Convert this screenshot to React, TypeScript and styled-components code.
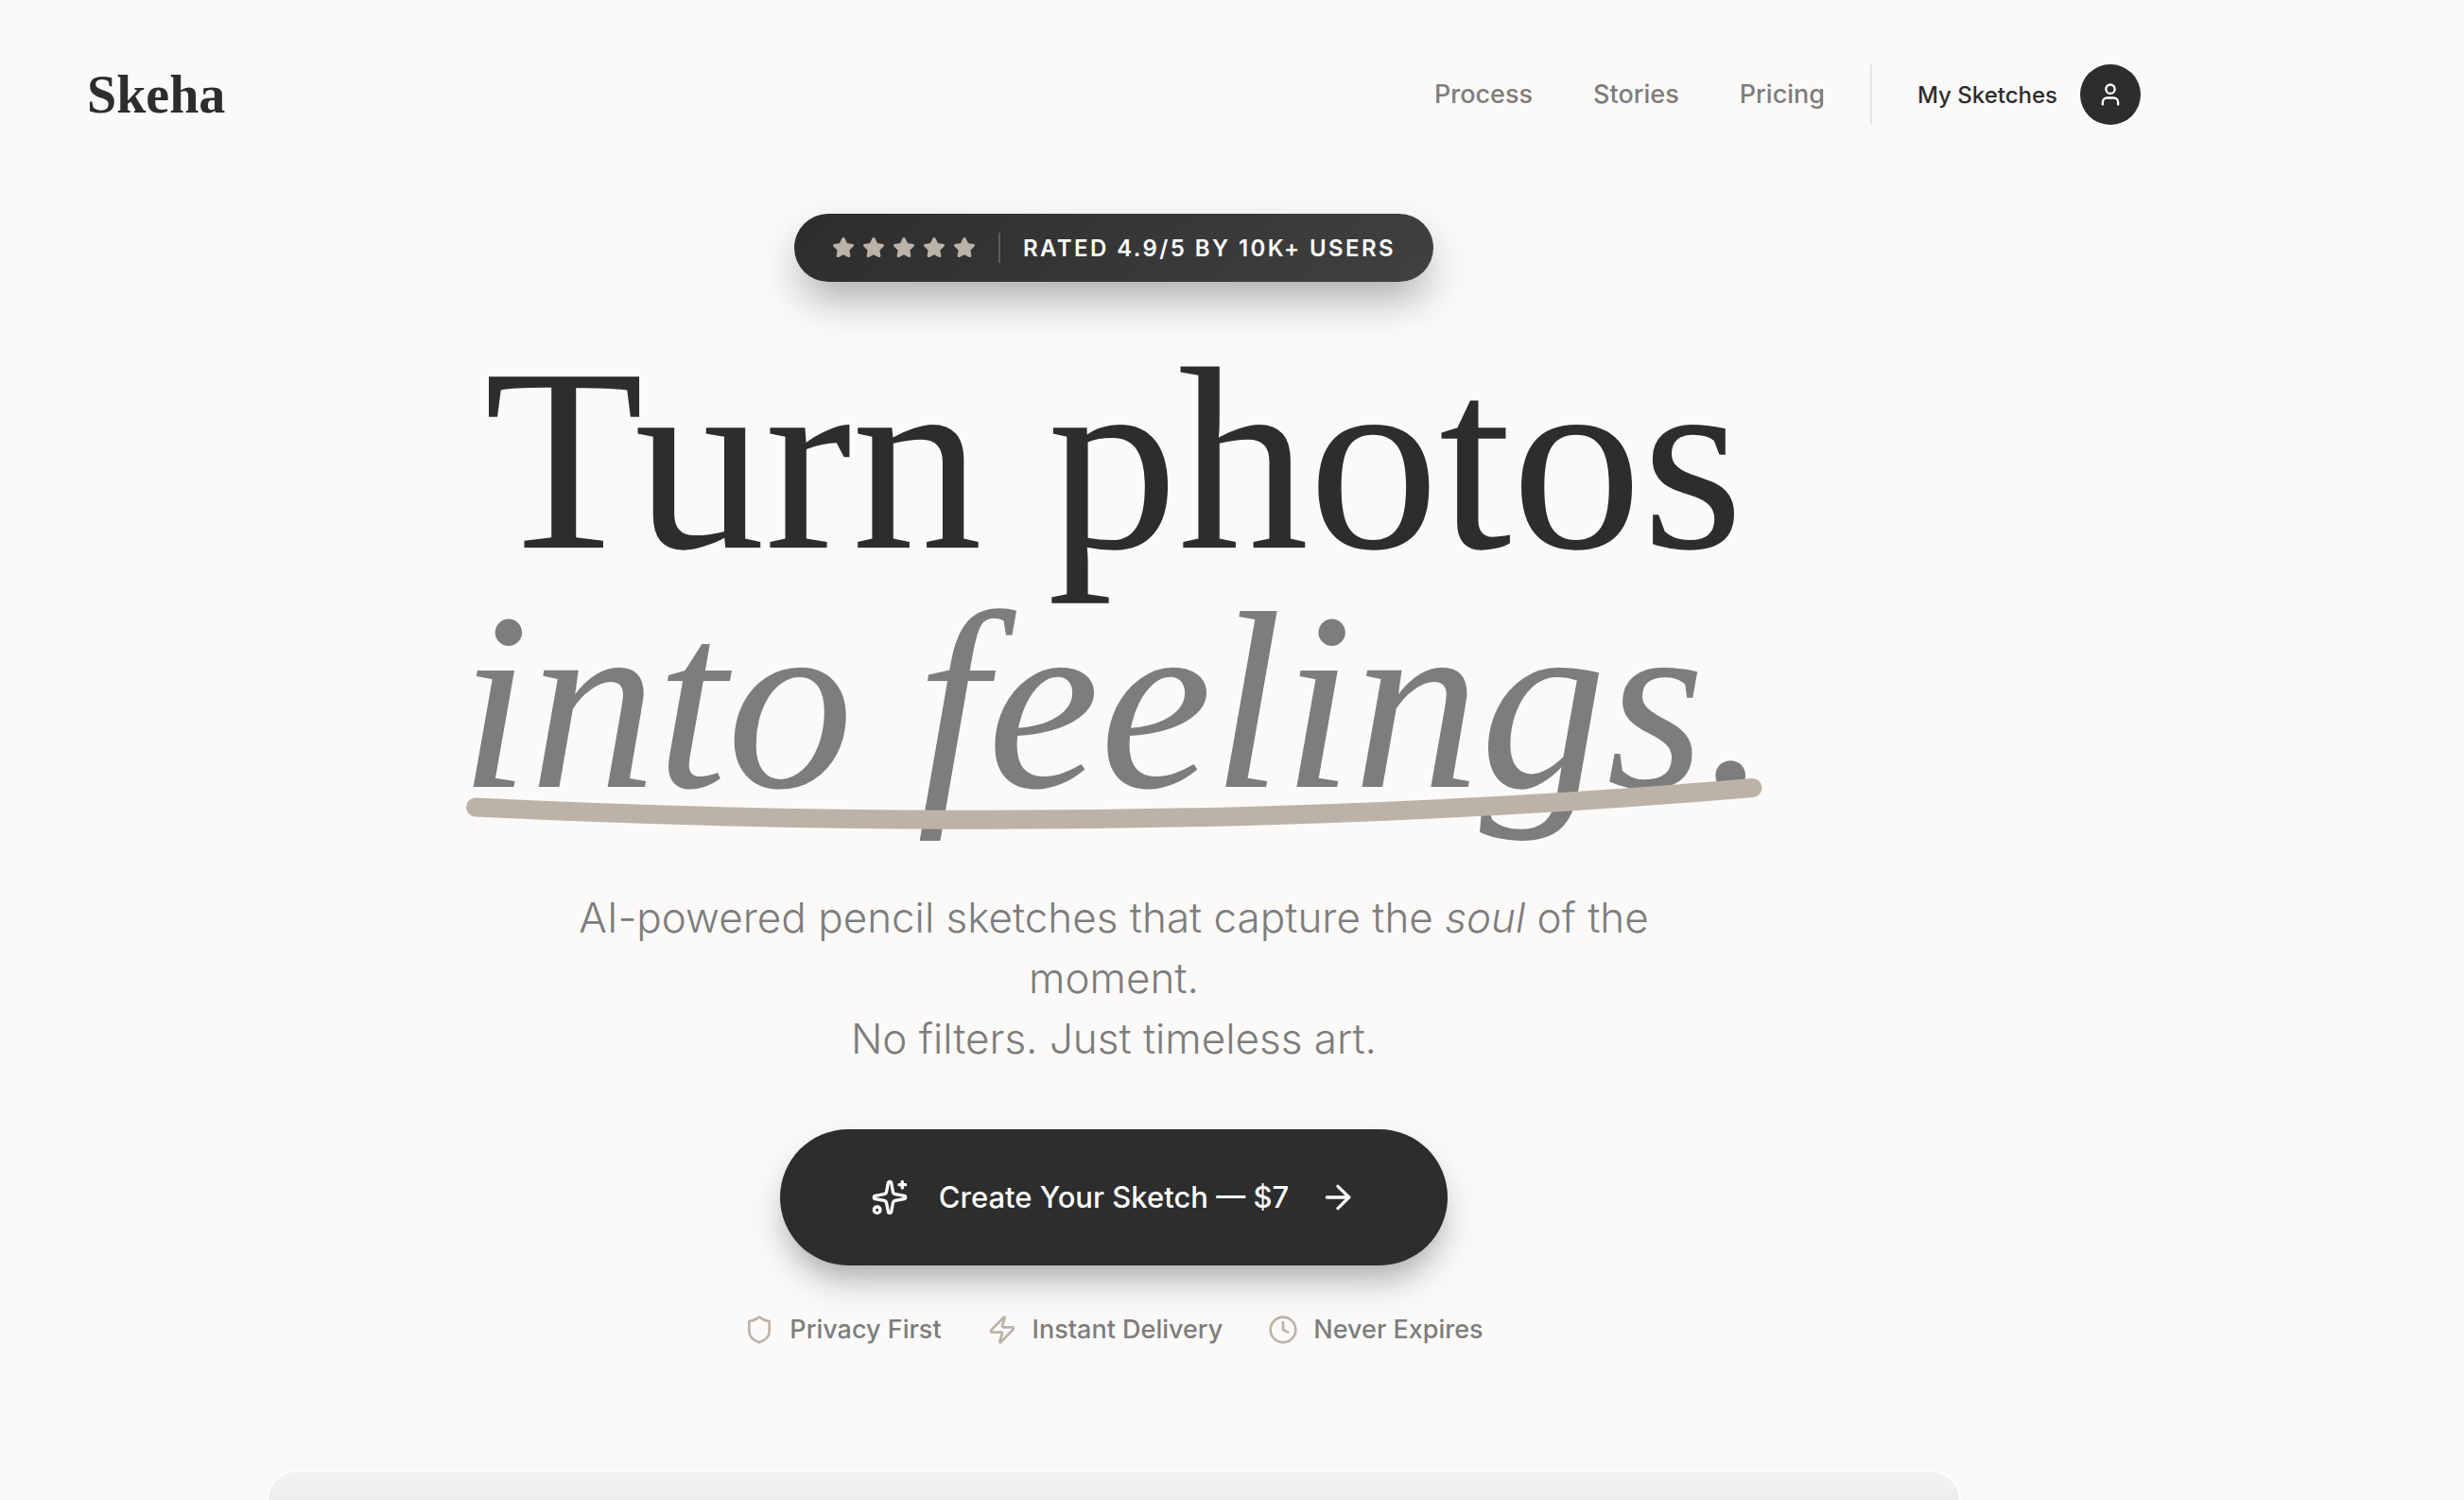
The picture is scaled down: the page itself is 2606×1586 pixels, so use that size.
import React from "react";
import styled, { createGlobalStyle } from "styled-components";
import { ArrowRight, Clock, Shield, Sparkles, Star, User, Zap } from "lucide-react";

const ink = "#2d2d2d";
const muted = "#7d7d7d";
const sand = "#bdb2a7";
const serif = `"Liberation Serif", "Times New Roman", serif`;
const sans = `Inter, "Liberation Sans", sans-serif`;

const GlobalStyle = createGlobalStyle`
  *, *::before, *::after { box-sizing: border-box; }
  body {
    margin: 0;
    background: #fbfaf8;
    color: ${ink};
    font-family: ${sans};
    -webkit-font-smoothing: antialiased;
  }
  h1, p, ul { margin: 0; padding: 0; }
  a { color: inherit; text-decoration: none; }
`;

const Page = styled.div`
  display: flex;
  flex-direction: column;
  width: 100%;
  max-width: 2356px;
  height: 100vh;
  overflow: hidden;
`;

const Header = styled.header`
  display: flex;
  align-items: center;
  justify-content: space-between;
  padding: 68px 92px 0;
`;

const Logo = styled.a`
  font: 700 56px/64px ${serif};
`;

const Nav = styled.nav`
  display: flex;
  align-items: center;
  gap: 64px;
`;

const NavLink = styled.a`
  font-size: 27px;
  font-weight: 500;
  line-height: 40px;
  color: ${muted};
`;

const Account = styled.a`
  display: flex;
  align-items: center;
  gap: 24px;
  height: 64px;
  margin-left: -16px;
  padding-left: 48px;
  border-left: 2px solid #e5e5e3;
  font-size: 24px;
  font-weight: 500;
`;

const Avatar = styled.span`
  display: grid;
  place-items: center;
  width: 64px;
  height: 64px;
  border-radius: 50%;
  background: ${ink};
  color: #fff;
`;

const Hero = styled.main`
  display: flex;
  flex: 1;
  flex-direction: column;
  align-items: center;
  padding: 94px 48px 0;
`;

const Badge = styled.div`
  display: flex;
  align-items: center;
  gap: 24px;
  height: 72px;
  padding: 0 40px;
  border-radius: 36px;
  background: linear-gradient(135deg, #2d2d2d, #404040);
  box-shadow: 0 20px 50px rgba(0, 0, 0, 0.16), 0 24px 40px -12px rgba(0, 0, 0, 0.2);
  color: #fff;
  font-size: 24px;
  font-weight: 600;
  letter-spacing: 0.1em;
  white-space: nowrap;
`;

const Stars = styled.span`
  display: flex;
  gap: 8px;
  color: ${sand};
`;

const BadgeRule = styled.span`
  width: 2px;
  height: 32px;
  background: rgba(255, 255, 255, 0.2);
`;

const Title = styled.h1`
  display: flex;
  flex-direction: column;
  align-items: center;
  margin-top: 60px;
  font: 400 276px/256px ${serif};
  white-space: nowrap;
`;

const Accent = styled.em`
  position: relative;
  font-size: 268px;
  color: ${muted};
`;

const Underline = styled.svg`
  position: absolute;
  left: 0;
  bottom: -8px;
  width: 100%;
  height: 56px;
  overflow: visible;
`;

const Lead = styled.p`
  max-width: 1152px;
  margin-top: 68px;
  font-size: 44px;
  font-weight: 300;
  line-height: 64px;
  color: ${muted};
  text-align: center;
`;

const CreateButton = styled.button`
  display: flex;
  align-items: center;
  gap: 32px;
  height: 144px;
  margin-top: 64px;
  padding: 0 96px;
  border: 0;
  border-radius: 72px;
  background: ${ink};
  box-shadow: 0 20px 50px rgba(0, 0, 0, 0.1), 0 20px 30px -8px rgba(0, 0, 0, 0.24);
  color: #fff;
  font: 500 31px/48px ${sans};
  white-space: nowrap;
  cursor: pointer;
`;

const Perks = styled.ul`
  display: flex;
  gap: 48px;
  margin-top: 48px;
  list-style: none;
`;

const Perk = styled.li`
  display: flex;
  align-items: center;
  gap: 16px;
  color: ${muted};
  font-size: 27px;
  font-weight: 500;
  line-height: 40px;
  white-space: nowrap;

  svg { color: ${sand}; }
`;

const Preview = styled.section`
  flex: 1;
  width: 100%;
  max-width: 1792px;
  margin-top: 128px;
  border: 2px solid #fefefd;
  border-bottom: 0;
  border-radius: 48px 48px 0 0;
  background: linear-gradient(#f3f3f2, #ededec 32px);
  box-shadow: 0 24px 100px rgba(0, 0, 0, 0.06);
`;

const links = ["Process", "Stories", "Pricing"];
const perks = [
  { icon: Shield, label: "Privacy First" },
  { icon: Zap, label: "Instant Delivery" },
  { icon: Clock, label: "Never Expires" },
];

export default function App() {
  return (
    <>
      <GlobalStyle />
      <Page>
        <Header>
          <Logo href="#">Skeha</Logo>
          <Nav aria-label="Main">
            {links.map((label) => (
              <NavLink key={label} href={`#${label.toLowerCase()}`}>{label}</NavLink>
            ))}
            <Account href="#sketches">
              My Sketches
              <Avatar><User size={28} /></Avatar>
            </Account>
          </Nav>
        </Header>
        <Hero>
          <Badge>
            <Stars aria-hidden="true">
              {[0, 1, 2, 3, 4].map((n) => <Star key={n} size={24} fill="currentColor" />)}
            </Stars>
            <BadgeRule />
            RATED 4.9/5 BY 10K+ USERS
          </Badge>
          <Title>
            <span>Turn photos</span>
            <Accent>
              into feelings.
              <Underline viewBox="0 0 1384 56" preserveAspectRatio="none" aria-hidden="true">
                <path d="M17 31.5Q722 66 1367 11" fill="none" stroke={sand} strokeWidth="20" strokeLinecap="round" />
              </Underline>
            </Accent>
          </Title>
          <Lead>
            AI-powered pencil sketches that capture the <em>soul</em> of the moment.
            <br />
            No filters. Just timeless art.
          </Lead>
          <CreateButton type="button">
            <Sparkles size={40} />
            Create Your Sketch — $7
            <ArrowRight size={40} />
          </CreateButton>
          <Perks>
            {perks.map(({ icon: Icon, label }) => (
              <Perk key={label}><Icon size={32} />{label}</Perk>
            ))}
          </Perks>
          <Preview aria-label="Sketch preview" />
        </Hero>
      </Page>
    </>
  );
}
